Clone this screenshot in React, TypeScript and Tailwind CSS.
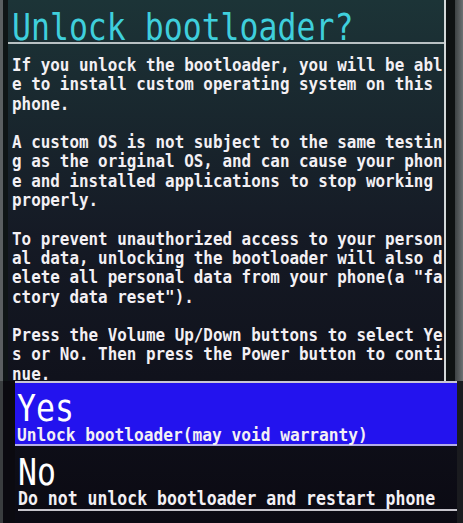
import React from "react";

const mono = "font-['DejaVu_Sans_Mono',monospace]";

function Line({ text, size = "text-[15.9px]" }: { text: string; size?: string }) {
  return (
    <div className={`h-[19.3px] leading-[19.3px] whitespace-pre font-bold ${size}`}>
      <span className="inline-block scale-y-[1.14] origin-[0_15px]">{text || "\u00a0"}</span>
    </div>
  );
}

function Big({ text, cls }: { text: string; cls: string }) {
  return (
    <div className={`h-[31.5px] leading-none text-[31.5px] whitespace-pre ${cls}`}>
      <span className="inline-block scale-y-[1.2] origin-[0_27px]">{text}</span>
    </div>
  );
}

const body = [
  "If you unlock the bootloader, you will be abl",
  "e to install custom operating system on this",
  "phone.",
  "",
  "A custom OS is not subject to the same testin",
  "g as the original OS, and can cause your phon",
  "e and installed applications to stop working",
  "properly.",
  "",
  "To prevent unauthorized access to your person",
  "al data, unlocking the bootloader will also d",
  "elete all personal data from your phone(a \"fa",
  "ctory data reset\").",
  "",
  "Press the Volume Up/Down buttons to select Ye",
  "s or No. Then press the Power button to conti",
  "nue.",
];

export default function App() {
  return (
    <div
      className={`w-[463px] h-[523px] overflow-hidden flex flex-col bg-linear-to-b from-[#1c3437] via-[#151a25] via-45% to-[#0b0a13] text-[#f3f0f4] ${mono}`}
    >
      {/* upper section */}
      <div className="h-[381px] flex shrink-0">
        <div className="w-[3px] bg-[#5b5f61]" />
        <div className="w-[5px] bg-[#0f1516]" />
        <div className="w-[436px] flex flex-col">
          <div className="h-[42px] pt-[14px] pl-[4px] shrink-0">
            <Big text="Unlock bootloader?" cls="text-[#3fcfdc]" />
          </div>
          <div className="h-[2px] bg-[#b9c1c3] shrink-0" />
          <div className="h-[337px] pt-[12px] pl-[4px] shrink-0">
            {body.map((t, i) => (
              <Line key={i} text={t} />
            ))}
          </div>
        </div>
        <div className="w-[2px] bg-[#d3d8d9]" />
        <div className="w-[9px] bg-[#0e1213]" />
        <div className="w-[8px] bg-linear-to-r from-[#3d4244] to-[#6b7072]" />
      </div>

      {/* lower section */}
      <div className="flex-1 flex">
        <div className="w-[3px] bg-[#3a3d3f]" />
        <div className="w-[12px] bg-[#0b0a10]" />
        <div className="w-[442px] flex flex-col">
          <div className="h-[2px] bg-[#c9c6d4] shrink-0" />
          <div className="h-[61px] bg-[#2313ee] pl-[2px] pt-[12px] shrink-0">
            <Big text="Yes" cls="text-white" />
            <div className="-mt-[1px]">
              <Line text="Unlock bootloader(may void warranty)" size="text-[16.2px]" />
            </div>
          </div>
          <div className="h-[2px] bg-[#b3ade6] shrink-0" />
          <div className="pl-[3px] pt-[13px]">
            <Big text="No" cls="text-white" />
            <div className="-mt-[1px]">
              <Line text="Do not unlock bootloader and restart phone" size="text-[16.5px]" />
            </div>
          </div>
          <div className="h-[2px] bg-[#c6c4cc] ml-[3px]" />
        </div>
        <div className="w-[6px] bg-[#1a1b1f]" />
      </div>
    </div>
  );
}
